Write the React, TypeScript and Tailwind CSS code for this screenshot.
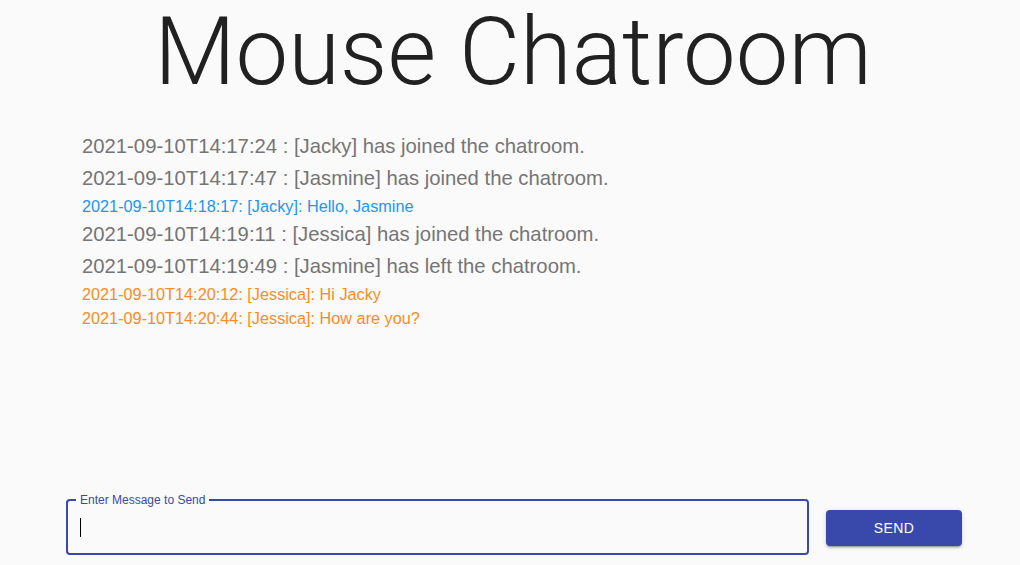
import React from "react"

type Line = { text: string; kind: "system" | "mine" | "other" }

const LINES: Line[] = [
  { text: "2021-09-10T14:17:24 : [Jacky] has joined the chatroom.", kind: "system" },
  { text: "2021-09-10T14:17:47 : [Jasmine] has joined the chatroom.", kind: "system" },
  { text: "2021-09-10T14:18:17: [Jacky]: Hello, Jasmine", kind: "mine" },
  { text: "2021-09-10T14:19:11 : [Jessica] has joined the chatroom.", kind: "system" },
  { text: "2021-09-10T14:19:49 : [Jasmine] has left the chatroom.", kind: "system" },
  { text: "2021-09-10T14:20:12: [Jessica]: Hi Jacky", kind: "other" },
  { text: "2021-09-10T14:20:44: [Jessica]: How are you?", kind: "other" },
]

function LogLine({ line }: { line: Line }) {
  if (line.kind === "system") {
    return <p className="text-[20.3px] leading-[32px] text-[#757575]">{line.text}</p>
  }
  return (
    <p
      className={
        line.kind === "mine"
          ? "text-[16.25px] leading-[24px] text-[#2196f3]"
          : "text-[16.25px] leading-[24px] text-[#fb8c1e]"
      }
    >
      {line.text}
    </p>
  )
}

export default function App() {
  return (
    <div
      className="flex h-[565px] w-full flex-col overflow-hidden bg-[#fafafa]"
      style={{ fontFamily: '"Liberation Sans", Arial, sans-serif' }}
    >
      <h1
        className="pl-[6px] text-center text-[94px] font-light leading-[104px] text-[#212121]"
        style={{ fontFamily: 'Roboto, "Liberation Sans", sans-serif' }}
      >
        Mouse Chatroom
      </h1>

      <div className="flex-1 pl-[82px] pt-[26px]">
        {LINES.map((l, i) => (
          <LogLine key={i} line={l} />
        ))}
      </div>

      <div className="flex items-center gap-[17px] pb-[10px] pl-[66px]">
        <div className="relative flex h-[56px] w-[743px] items-center rounded-[4px] border-2 border-[#3949ab] pl-[12px]">
          <span className="absolute left-[8px] top-[-8px] bg-[#fafafa] px-[4px] text-[12px] leading-[14px] text-[#3949ab]">
            Enter Message to Send
          </span>
          <span className="h-[19px] w-px bg-black" />
        </div>
        <button className="mt-[2px] h-[36px] w-[136px] rounded-[4px] bg-[#3949ab] text-[14px] uppercase tracking-[0.4px] text-white shadow-[0_3px_1px_-2px_rgba(0,0,0,0.2),0_2px_2px_0_rgba(0,0,0,0.14),0_1px_5px_0_rgba(0,0,0,0.12)]">
          Send
        </button>
      </div>
    </div>
  )
}
